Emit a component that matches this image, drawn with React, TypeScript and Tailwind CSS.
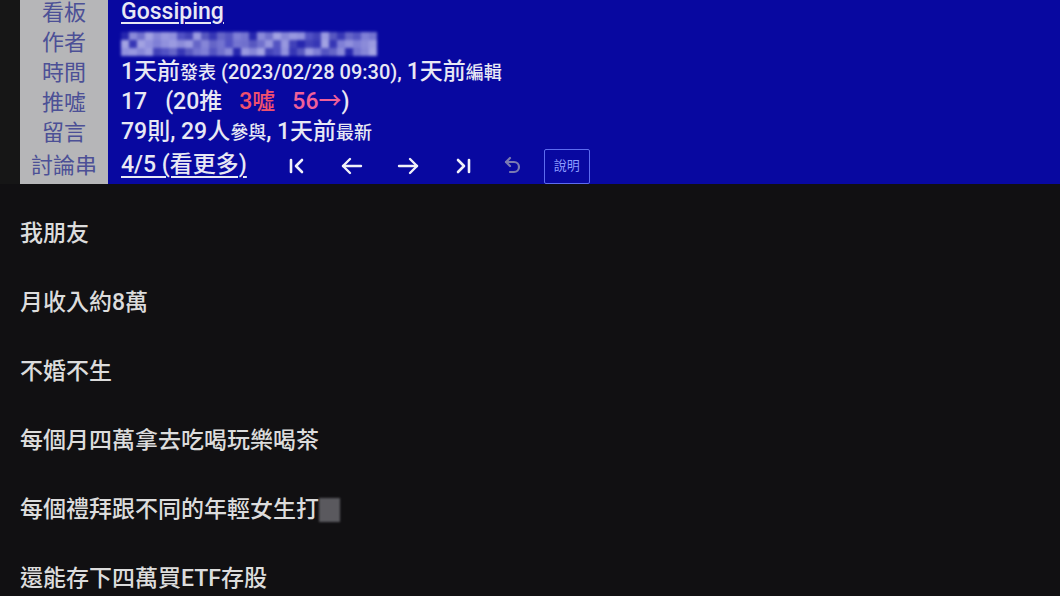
const CJK = "font-['Roboto','Noto_Sans_CJK_TC',sans-serif]";

const blurCols = [
  "#2a2ab0", "#5a5ac8", "#8c8cdc", "#a8a8e6", "#7070cc", "#b4b4ea", "#6060c4", "#9a9ae0",
  "#4848bc", "#8080d6", "#a0a0e4", "#5c5cc6", "#9494de", "#3c3cb8", "#7c7cd2", "#acace8",
];

function BlurredAuthor() {
  const rows = [0, 1, 2];
  const cols = Array.from({ length: 32 }, (_, i) => i);
  return (
    <div className="flex flex-col blur-[1.8px] opacity-90">
      {rows.map((r) => (
        <div key={r} className="flex">
          {cols.map((c) => (
            <div
              key={c}
              className="h-[8px] w-[8px]"
              style={{ backgroundColor: blurCols[(c * 7 + r * 5 + (c % 3) * r) % blurCols.length] }}
            />
          ))}
        </div>
      ))}
    </div>
  );
}

function Row({ label, children, tall }: { label: string; children: React.ReactNode; tall?: boolean }) {
  return (
    <div className={`flex ${tall ? "h-[37px]" : "h-[30px]"}`}>
      <div className="w-[88px] shrink-0 bg-[#b6b6b8] flex items-center justify-center text-[22px] text-[#4c5096]">
        {label}
      </div>
      <div className="flex-1 bg-[#0808a0] flex items-center pl-[13px] text-[23px] font-medium text-[#e8e8f4]">
        {children}
      </div>
    </div>
  );
}

export default function App() {
  return (
    <div className={`w-[1060px] h-[596px] overflow-hidden bg-[#111012] ${CJK}`}>
      <div className="flex mt-[-3px]">
        <div className="w-[20px] shrink-0 bg-[#161616]" />
        <div className="flex-1 flex flex-col">
          <Row label="看板">
            <span className="underline underline-offset-[3px] decoration-[1.5px]">Gossiping</span>
          </Row>
          <Row label="作者">
            <div className="mt-[4px]">
              <BlurredAuthor />
            </div>
          </Row>
          <Row label="時間">
            <span>1天前</span>
            <span className="text-[18px]">發表</span>
            <span className="ml-[5px] text-[20px]">(2023/02/28 09:30),</span>
            <span className="ml-[5px]">1天前</span>
            <span className="text-[18px]">編輯</span>
          </Row>
          <Row label="推噓">
            <span>17</span>
            <span className="ml-[18px]">(20推</span>
            <span className="ml-[17px] text-[#f0506e]">3噓</span>
            <span className="ml-[17px] text-[#f0609a]">56→</span>
            <span>)</span>
          </Row>
          <Row label="留言">
            <span>79則, 29人</span>
            <span className="text-[18px]">參與</span>
            <span>, 1天前</span>
            <span className="text-[18px]">最新</span>
          </Row>
          <Row label="討論串" tall>
            <span className="underline underline-offset-[4px] decoration-[1.5px]">4/5 (看更多)</span>
            <svg className="ml-[37px]" width="24" height="24" viewBox="0 0 24 24" fill="none" stroke="#f0f0f8" strokeWidth="2.6" strokeLinecap="round" strokeLinejoin="round">
              <path d="M7 6v12" />
              <path d="M18 6l-6 6 6 6" />
            </svg>
            <svg className="ml-[32px]" width="24" height="24" viewBox="0 0 24 24" fill="none" stroke="#f0f0f8" strokeWidth="2.4" strokeLinecap="round" strokeLinejoin="round">
              <path d="M21 12H3" />
              <path d="M10 5l-7 7 7 7" />
            </svg>
            <svg className="ml-[32px]" width="24" height="24" viewBox="0 0 24 24" fill="none" stroke="#f0f0f8" strokeWidth="2.4" strokeLinecap="round" strokeLinejoin="round">
              <path d="M3 12h18" />
              <path d="M14 5l7 7-7 7" />
            </svg>
            <svg className="ml-[32px]" width="24" height="24" viewBox="0 0 24 24" fill="none" stroke="#f0f0f8" strokeWidth="2.6" strokeLinecap="round" strokeLinejoin="round">
              <path d="M6 6l6 6-6 6" />
              <path d="M17 6v12" />
            </svg>
            <svg className="ml-[25px]" width="24" height="24" viewBox="0 0 24 24" fill="none" stroke="#7a7ab2" strokeWidth="2.2" strokeLinecap="round" strokeLinejoin="round">
              <path d="M9 4L5 8l4 4" />
              <path d="M5 8h8a5 5 0 0 1 0 10h-4" />
            </svg>
            <div className="ml-[19px] h-[35px] w-[46px] mt-[1px] flex items-center justify-center border border-[#5d6cf0] rounded-[2px] text-[13px] font-normal text-[#8c9cff]">
              說明
            </div>
          </Row>
        </div>
      </div>
      <div className="flex flex-col gap-[39px] pt-[35px] pl-[20px] text-[23px] font-medium leading-[30px] text-[#dcdcdc]">
        <p>我朋友</p>
        <p>月收入約8萬</p>
        <p>不婚不生</p>
        <p>每個月四萬拿去吃喝玩樂喝茶</p>
        <p className="flex items-center">
          每個禮拜跟不同的年輕女生打
          <span className="inline-block h-[24px] w-[21px] bg-[#5a595e] blur-[1px]" />
        </p>
        <p>還能存下四萬買ETF存股</p>
      </div>
    </div>
  );
}
